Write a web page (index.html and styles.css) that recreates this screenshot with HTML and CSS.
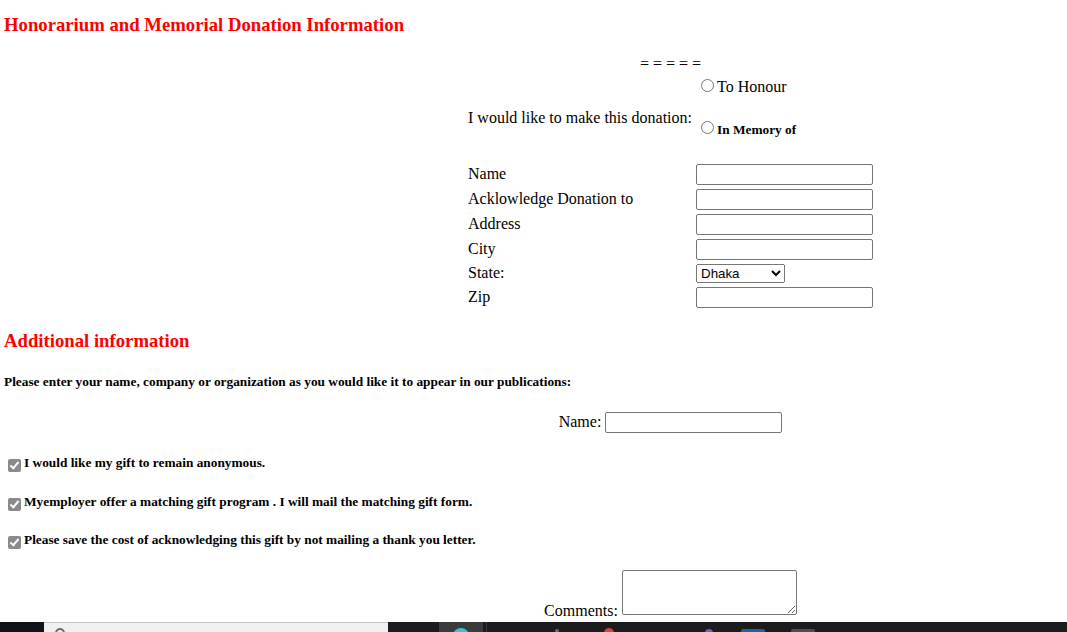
FILE: index.html
```html
<!DOCTYPE html>
<html lang="en">
<head>
<meta charset="utf-8">
<title>Honorarium and Memorial Donation Information</title>
<link rel="stylesheet" href="styles.css">
</head>
<body>
<div class="page">
  <h3 class="heading">Honorarium and Memorial Donation Information</h3>

  <div class="donation">
    <div class="rule">= = = = =</div>
    <div class="choice-row">
      <div class="label label-donation">I would like to make this donation:</div>
      <div class="radios">
        <div class="radio-line"><input type="radio" name="kind" class="radio">To Honour</div>
        <div class="radio-line radio-memory"><input type="radio" name="kind" class="radio"><b class="small-bold">In Memory of</b></div>
      </div>
    </div>
    <div class="form-grid">
      <div class="label">Name</div>
      <div class="field"><input type="text" class="text-input"></div>
      <div class="label">Acklowledge Donation to</div>
      <div class="field"><input type="text" class="text-input"></div>
      <div class="label">Address</div>
      <div class="field"><input type="text" class="text-input"></div>
      <div class="label">City</div>
      <div class="field"><input type="text" class="text-input"></div>
      <div class="label">State:</div>
      <div class="field">
        <select class="state-select">
          <option>Dhaka</option>
          <option>Chittagong</option>
          <option>Khulna</option>
          <option>Rajshahi</option>
          <option>Sylhet</option>
        </select>
      </div>
      <div class="label">Zip</div>
      <div class="field"><input type="text" class="text-input"></div>
    </div>
  </div>

  <h3 class="heading heading-additional">Additional information</h3>
  <p class="note">Please enter your name, company or organization as you would like it to appear in our publications:</p>

  <div class="center-col name-row">
    <span class="inline-label">Name:</span>
    <input type="text" class="text-input">
  </div>

  <div class="check-list">
    <div class="check-row"><input type="checkbox" class="check" checked><b class="small-bold">I would like my gift to remain anonymous.</b></div>
    <div class="check-row"><input type="checkbox" class="check" checked><b class="small-bold">Myemployer offer a matching gift program . I will mail the matching gift form.</b></div>
    <div class="check-row"><input type="checkbox" class="check" checked><b class="small-bold">Please save the cost of acknowledging this gift by not mailing a thank you letter.</b></div>
  </div>

  <div class="center-col comments-row">
    <span class="inline-label comments-label">Comments:</span>
    <textarea class="comments"></textarea>
  </div>
</div>

<div class="taskbar">
  <div class="tb-start"></div>
  <div class="tb-search"><span class="tb-search-icon"></span></div>
  <div class="tb-tile"><span class="tb-tile-icon"></span></div>
  <div class="tb-sep"></div>
  <span class="tb-icon tb-grey-dot"></span>
  <span class="tb-icon tb-red"></span>
  <span class="tb-icon tb-purple"></span>
  <span class="tb-icon tb-blue"></span>
  <span class="tb-icon tb-greybox"></span>
</div>
</body>
</html>
```

FILE: styles.css
```css
html, body {
  margin: 0;
  padding: 0;
  background: #fff;
}

body {
  font-family: "Liberation Serif", "Times New Roman", serif;
  font-size: 16px;
  color: #000;
}

.page {
  padding: 14px 0 40px 4px;
}

.heading {
  margin: 0;
  font-size: 18.72px;
  line-height: 21px;
  font-weight: bold;
  color: #f00;
}

.heading-additional {
  margin-top: 22px;
}

.donation {
  margin-left: 461px;
  width: 411px;
}

.rule {
  margin-top: 20px;
  text-align: center;
  line-height: 18px;
}

.choice-row {
  display: flex;
  margin-top: 5px;
  padding-left: 3px;
}

.label {
  line-height: 18px;
  white-space: nowrap;
}

.choice-row .label {
  width: 228px;
  flex: none;
}

.label-donation {
  margin-top: 31px;
}

.radio-line {
  line-height: 18px;
  white-space: nowrap;
}

.radio-memory {
  margin-top: 24px;
}

.radio {
  margin: 0 3px 0 5px;
  width: 13px;
  height: 13px;
  vertical-align: baseline;
}

.small-bold {
  font-size: 13.33px;
  font-weight: bold;
}

.form-grid {
  display: grid;
  grid-template-columns: 228px auto;
  row-gap: 4px;
  align-items: center;
  margin-top: 25px;
  padding-left: 3px;
}

.form-grid .label {
  margin-top: -2px;
}

.field {
  display: flex;
}

.text-input {
  box-sizing: border-box;
  width: 177px;
  height: 21px;
  margin: 0;
  padding: 1px 2px;
  border: 1px solid #767676;
  border-radius: 2px;
  font-family: "Liberation Sans", Arial, sans-serif;
  font-size: 13.33px;
  background: #fff;
}

.state-select {
  box-sizing: border-box;
  width: 89px;
  height: 19px;
  margin: 0;
  font-family: "Liberation Sans", Arial, sans-serif;
  font-size: 13.33px;
  color: #000;
}

.note {
  margin: 23px 0 0;
  font-size: 13.33px;
  font-weight: bold;
  line-height: 16px;
}

.center-col {
  margin-left: 270px;
  display: flex;
  justify-content: center;
  gap: 4px;
}

.name-row {
  margin-top: 22px;
  align-items: center;
}

.name-row .inline-label {
  margin-top: -2px;
}

.inline-label {
  line-height: 18px;
  white-space: nowrap;
}

.check-list {
  display: flex;
  flex-direction: column;
  gap: 21.8px;
  margin-top: 21.8px;
}

.check-row {
  display: flex;
  align-items: flex-start;
  height: 17px;
  line-height: 16px;
  white-space: nowrap;
}

.check {
  -webkit-appearance: none;
  appearance: none;
  position: relative;
  box-sizing: border-box;
  width: 13px;
  height: 13px;
  margin: 4px 3px 0 4px;
  flex: none;
  background: #8a8a8a;
  border-radius: 2px;
}

.check::after {
  content: "";
  position: absolute;
  left: 4px;
  top: 1px;
  width: 3px;
  height: 7px;
  border: solid #fff;
  border-width: 0 2px 2px 0;
  transform: rotate(40deg);
}

.comments-row {
  margin-top: 20.6px;
  align-items: flex-end;
}

.comments-label {
  line-height: 16px;
  margin-bottom: -4px;
}

.comments {
  box-sizing: border-box;
  width: 175px;
  height: 45px;
  margin: 0;
  padding: 2px;
  border: 1px solid #767676;
  border-radius: 2px;
  font-family: "Liberation Mono", monospace;
  font-size: 13.33px;
}

/* Windows taskbar strip overlapping the bottom of the page */
.taskbar {
  position: fixed;
  left: 0;
  right: 0;
  bottom: 0;
  height: 10px;
  background: #1c1c1f;
  display: flex;
  align-items: flex-start;
  overflow: hidden;
}

.tb-start {
  width: 44px;
  height: 10px;
  background: #101317;
  flex: none;
}

.tb-search {
  box-sizing: border-box;
  width: 344px;
  height: 10px;
  background: #f0f0f0;
  border-top: 1px solid #c4c4c4;
  flex: none;
  display: flex;
}

.tb-search-icon {
  width: 10px;
  height: 10px;
  margin: 5px 0 0 11px;
  border: 2px solid #6e6e6e;
  border-radius: 50%;
  box-sizing: border-box;
}

.tb-tile {
  width: 44px;
  height: 10px;
  margin-left: 51px;
  background: #3b3b3d;
  flex: none;
  display: flex;
  justify-content: center;
}

.tb-tile-icon {
  width: 16px;
  height: 16px;
  margin-top: 6px;
  border-radius: 50%;
  background: #2fc6d6;
}

.tb-sep {
  width: 1px;
  height: 10px;
  margin-left: 3px;
  background: #3a3a3c;
  flex: none;
}

.tb-icon {
  flex: none;
  display: block;
}

.tb-grey-dot {
  width: 4px;
  height: 4px;
  margin: 7px 0 0 68px;
  background: #6a6a6a;
  border-radius: 50%;
}

.tb-red {
  width: 10px;
  height: 10px;
  margin: 6px 0 0 45px;
  background: #d8433a;
  border-radius: 50%;
}

.tb-purple {
  width: 8px;
  height: 8px;
  margin: 7px 0 0 91px;
  background: #6a5fd3;
  border-radius: 50%;
}

.tb-blue {
  width: 24px;
  height: 8px;
  margin: 7px 0 0 28px;
  background: #1266b4;
  border-radius: 2px 2px 0 0;
}

.tb-greybox {
  width: 24px;
  height: 8px;
  margin: 7px 0 0 26px;
  background: #4e4e50;
  border-radius: 2px 2px 0 0;
}
```
